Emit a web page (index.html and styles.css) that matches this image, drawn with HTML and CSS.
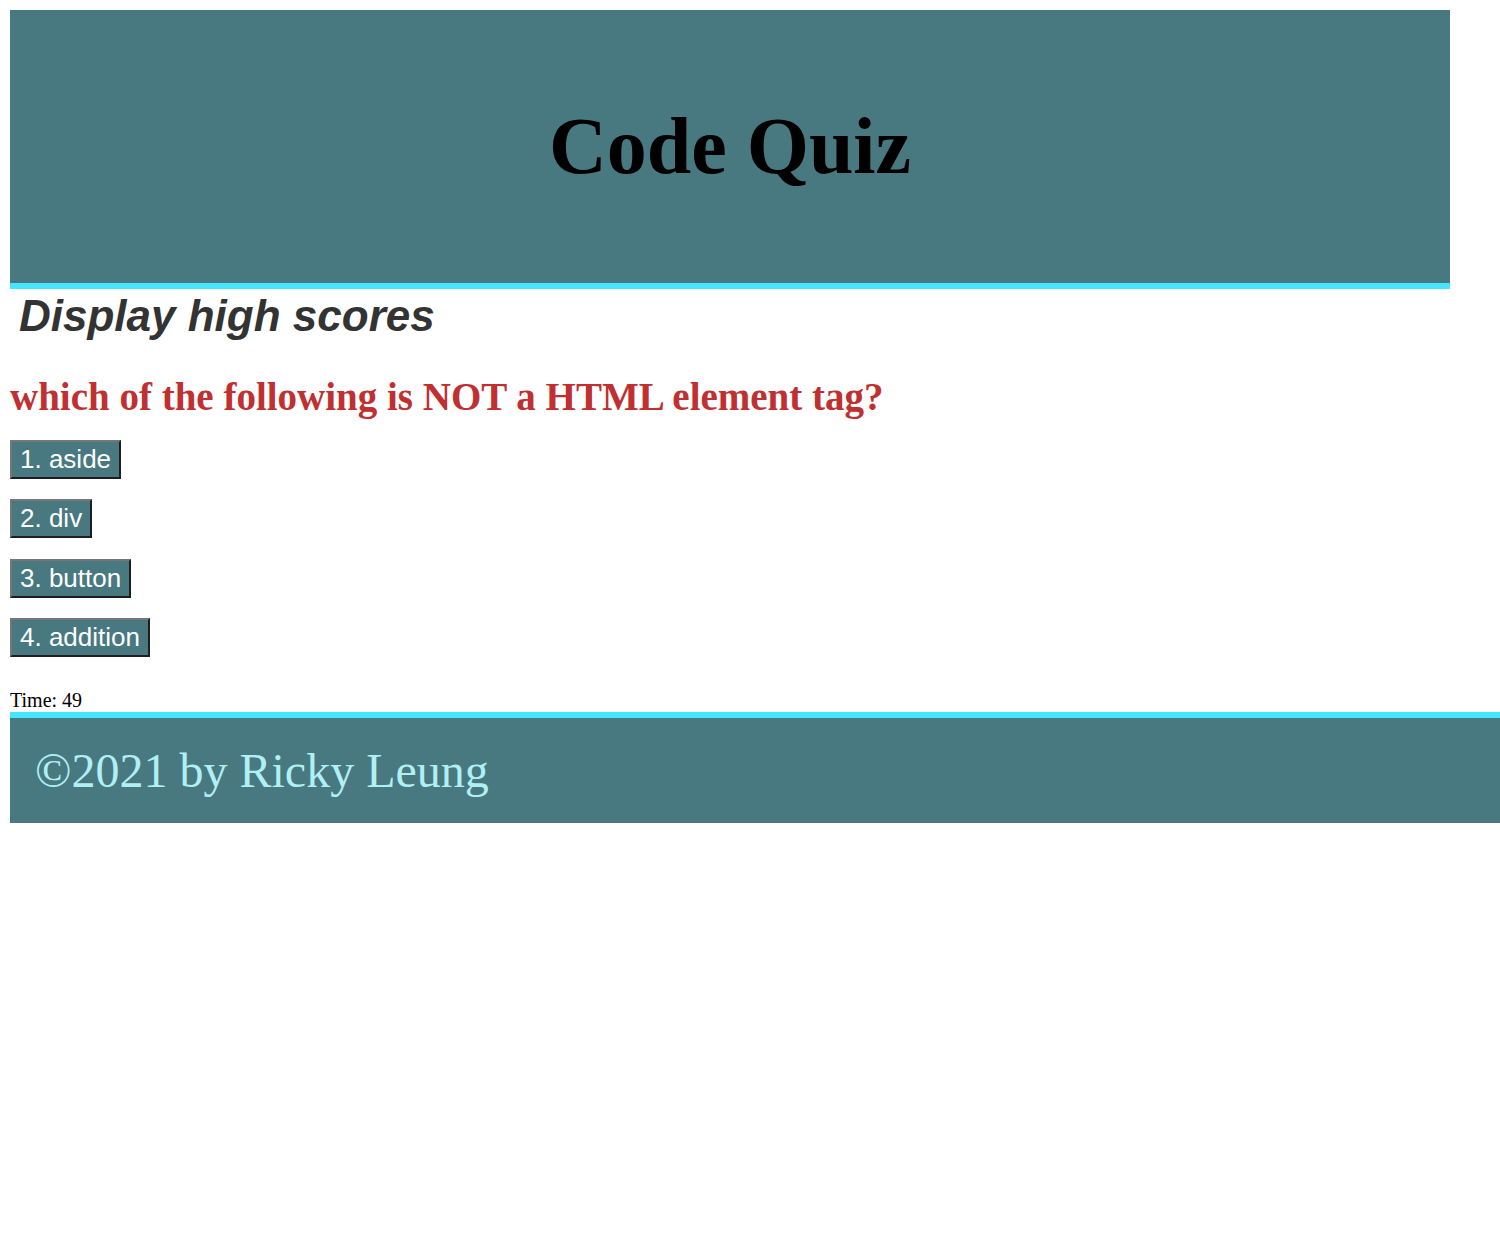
FILE: index.html
```html
<!DOCTYPE html>
<html lang="en">
<head>
<meta charset="utf-8">
<title>Code Quiz</title>
<link rel="stylesheet" href="styles.css">
</head>
<body>
<header class="site-header">
  <h1 class="site-title">Code Quiz</h1>
</header>
<main class="quiz">
  <h2 class="scores-link">Display high scores</h2>
  <h3 class="question">which of the following is NOT a HTML element tag?</h3>
  <div class="answers">
    <button class="answer" type="button">1. aside</button>
    <button class="answer" type="button">2. div</button>
    <button class="answer" type="button">3. button</button>
    <button class="answer" type="button">4. addition</button>
  </div>
  <p class="timer">Time: 49</p>
</main>
<footer class="site-footer">
  <p class="copyright">©2021 by Ricky Leung</p>
</footer>
</body>
</html>
```
FILE: styles.css
```css
html, body {
  margin: 0;
  padding: 0;
}
body {
  padding: 10px 0 0 10px;
  font-family: "Liberation Serif", "Times New Roman", serif;
  background: #ffffff;
  overflow: hidden;
}
.site-header {
  width: 1440px;
  background: #487980;
  border-bottom: 6px solid #44e6ff;
  padding: 91px 0 91px;
  text-align: center;
}
.site-title {
  margin: 0;
  font-family: "Liberation Serif", "Times New Roman", serif;
  font-weight: bold;
  font-size: 80px;
  line-height: normal;
  color: #000000;
}
.quiz {
  display: flex;
  flex-direction: column;
  align-items: flex-start;
}
.scores-link {
  margin: 2px 0 0 9px;
  font-family: "Liberation Sans", Arial, sans-serif;
  font-style: italic;
  font-weight: bold;
  font-size: 44px;
  line-height: normal;
  color: #333333;
}
.question {
  margin: 33px 0 0 0;
  font-family: "Liberation Serif", "Times New Roman", serif;
  font-weight: bold;
  font-size: 39px;
  line-height: normal;
  color: #c03030;
}
.answers {
  display: flex;
  flex-direction: column;
  align-items: flex-start;
  gap: 20.4px;
  margin-top: 21px;
}
.answer {
  font-family: "Liberation Sans", Arial, sans-serif;
  font-size: 26px;
  line-height: 29px;
  padding: 3px 8px;
  color: #ffffff;
  background: #487980;
  border: 2px solid;
  border-color: #767676 #1e1e1e #1e1e1e #767676;
  border-radius: 0;
  margin: 0;
}
.timer {
  margin: 32px 0 0 0;
  font-size: 20px;
  line-height: 23px;
  color: #000000;
}
.site-footer {
  background: #487980;
  border-top: 6px solid #44e6ff;
  padding: 25px 25px 25px;
}
.copyright {
  margin: 0;
  font-size: 48px;
  line-height: 55px;
  color: #b0f0f4;
}
```
